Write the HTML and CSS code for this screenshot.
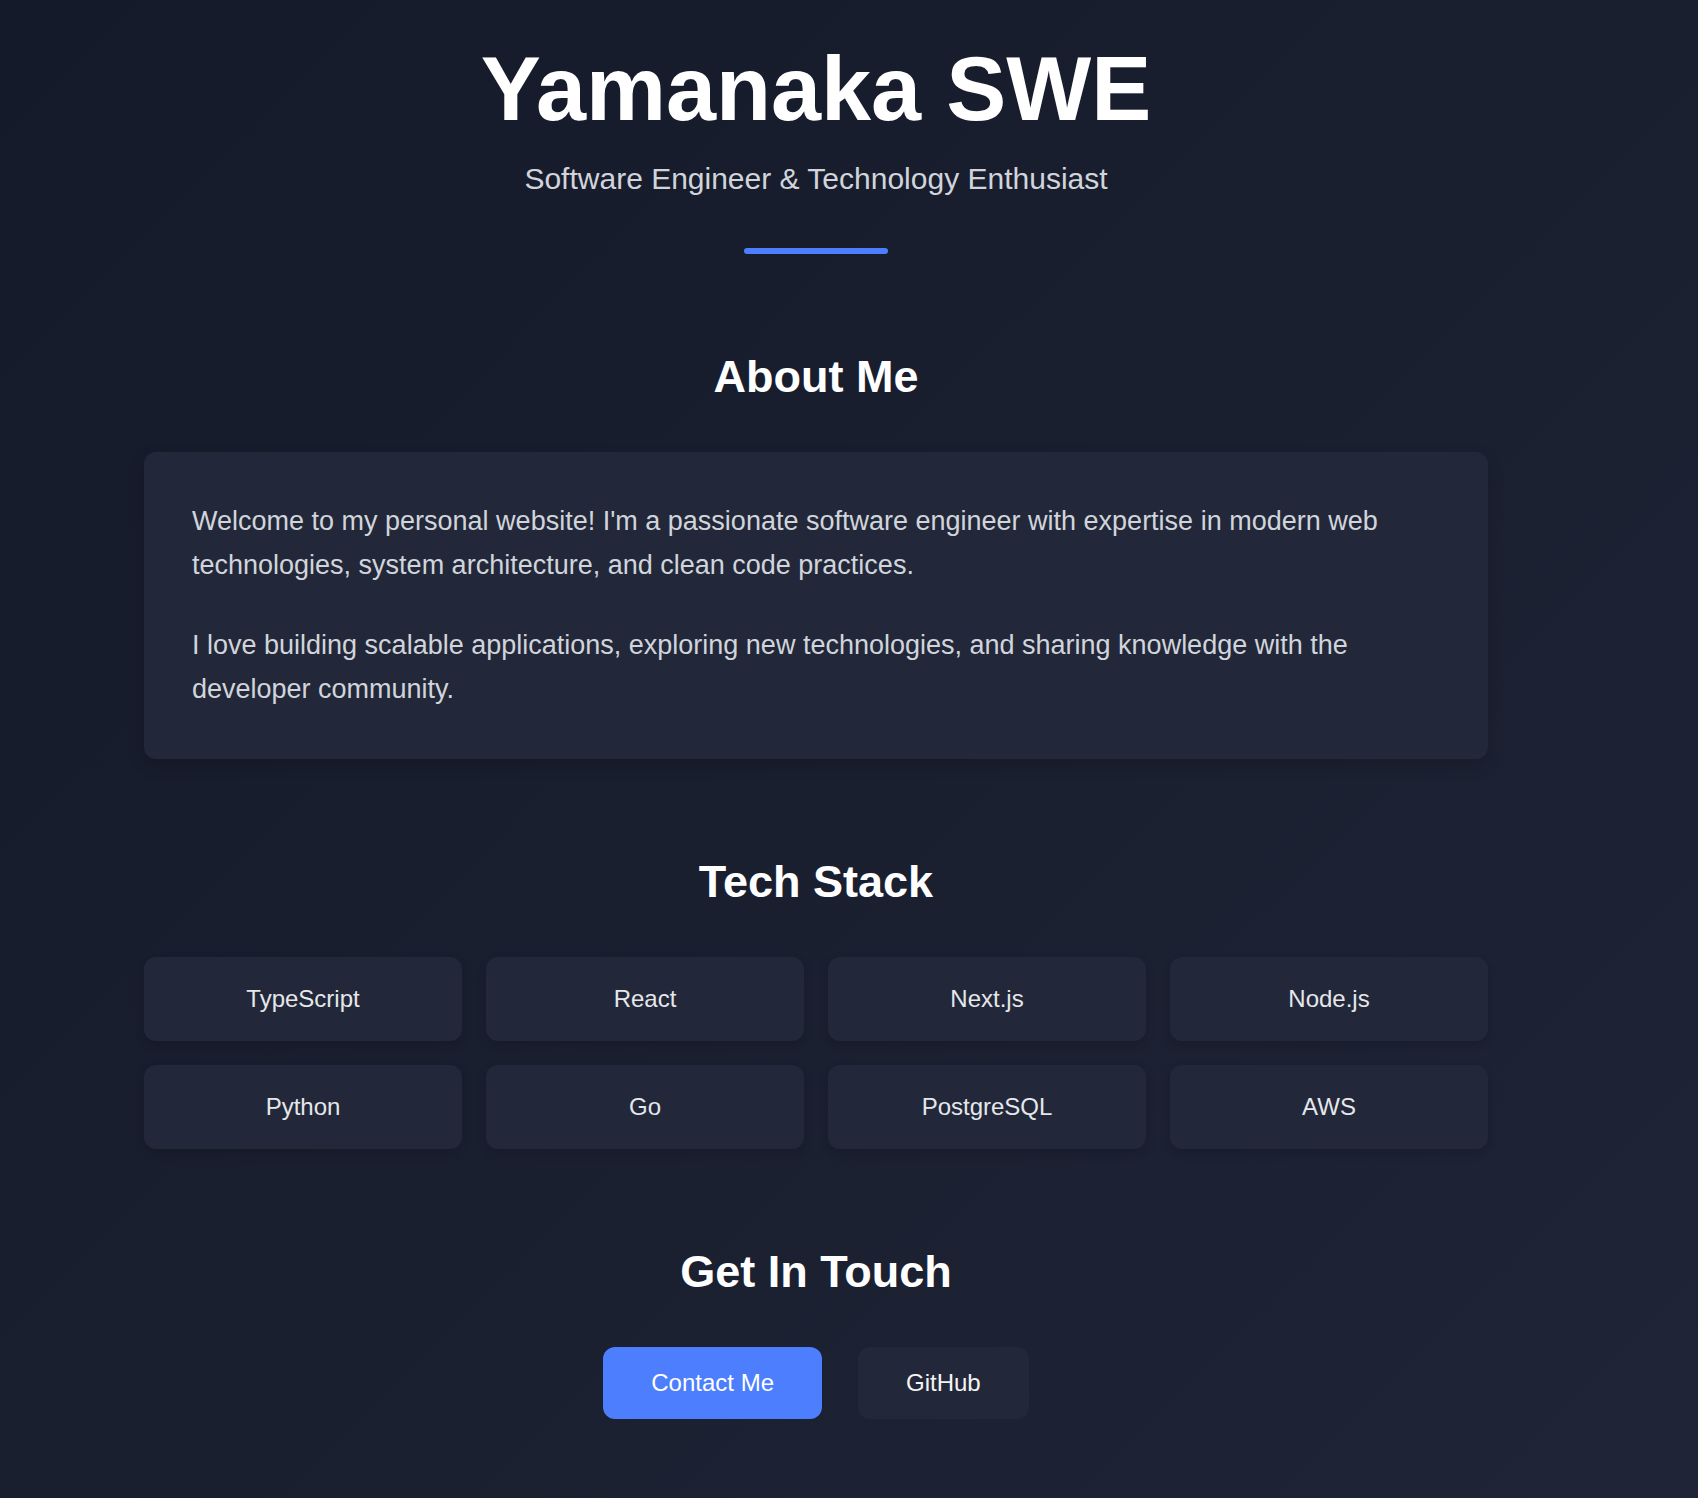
FILE: index.html
```html
<!DOCTYPE html>
<html lang="en">
<head>
<meta charset="utf-8">
<title>Yamanaka SWE</title>
<link rel="stylesheet" href="styles.css">
</head>
<body>
<div class="page">
  <main class="container">
    <header class="hero">
      <h1 class="hero-title">Yamanaka SWE</h1>
      <p class="hero-subtitle">Software Engineer &amp; Technology Enthusiast</p>
      <div class="hero-bar"></div>
    </header>

    <section class="section">
      <h2 class="section-title">About Me</h2>
      <div class="about-card">
        <p class="about-text">Welcome to my personal website! I'm a passionate software engineer with expertise in modern web technologies, system architecture, and clean code practices.</p>
        <p class="about-text">I love building scalable applications, exploring new technologies, and sharing knowledge with the developer community.</p>
      </div>
    </section>

    <section class="section">
      <h2 class="section-title">Tech Stack</h2>
      <div class="tech-grid">
        <div class="tech-item">TypeScript</div>
        <div class="tech-item">React</div>
        <div class="tech-item">Next.js</div>
        <div class="tech-item">Node.js</div>
        <div class="tech-item">Python</div>
        <div class="tech-item">Go</div>
        <div class="tech-item">PostgreSQL</div>
        <div class="tech-item">AWS</div>
      </div>
    </section>

    <section class="section section-last">
      <h2 class="section-title">Get In Touch</h2>
      <div class="actions">
        <a class="btn btn-primary" href="#">Contact Me</a>
        <a class="btn btn-secondary" href="#">GitHub</a>
      </div>
    </section>
  </main>
</div>
</body>
</html>
```

FILE: styles.css
```css
html, body {
  margin: 0;
  padding: 0;
}

body {
  min-height: 100vh;
  background: linear-gradient(135deg, #151a2a 0%, #1a1f30 50%, #1f2436 100%);
  font-family: "Liberation Sans", Arial, Helvetica, sans-serif;
  color: #ffffff;
}

.page {
  width: 1632px;
  padding-top: 44px;
  padding-bottom: 60px;
}

.container {
  max-width: 1344px;
  margin: 0 auto;
}

.hero {
  text-align: center;
  margin-bottom: 96px;
}

.hero-title {
  margin: 0 0 24px;
  font-size: 90px;
  line-height: 90px;
  font-weight: 700;
  color: #ffffff;
}

.hero-subtitle {
  margin: 0 0 48px;
  font-size: 30px;
  line-height: 42px;
  color: #d1d5db;
}

.hero-bar {
  width: 144px;
  height: 6px;
  margin: 0 auto;
  border-radius: 3px;
  background: #4c7efe;
}

.section {
  margin-bottom: 96px;
}

.section-last {
  margin-bottom: 0;
}

.section-title {
  margin: 0 0 48px;
  text-align: center;
  font-size: 45px;
  line-height: 54px;
  font-weight: 700;
  color: #ffffff;
}

.about-card {
  padding: 48px 48px 47px;
  border-radius: 12px;
  background: #222839;
  box-shadow: 0 6px 16px rgba(0, 0, 0, 0.18);
}

.about-text {
  margin: 0 0 36px;
  font-size: 27px;
  line-height: 1.625;
  color: #d1d5db;
}

.about-text:last-child {
  margin-bottom: 0;
}

.tech-grid {
  display: grid;
  grid-template-columns: repeat(4, 1fr);
  gap: 24px;
}

.tech-item {
  padding: 24px 16px;
  border-radius: 12px;
  background: #222839;
  box-shadow: 0 4px 10px rgba(0, 0, 0, 0.16);
  text-align: center;
  font-size: 24px;
  line-height: 36px;
  color: #e5e7eb;
}

.actions {
  display: flex;
  justify-content: center;
  gap: 36px;
}

.btn {
  display: inline-block;
  padding: 18px 48px;
  border-radius: 12px;
  font-size: 24px;
  line-height: 36px;
  text-decoration: none;
  color: #ffffff;
}

.btn-primary {
  background: #4c7efe;
}

.btn-secondary {
  background: #222839;
  color: #f3f4f6;
}
```
